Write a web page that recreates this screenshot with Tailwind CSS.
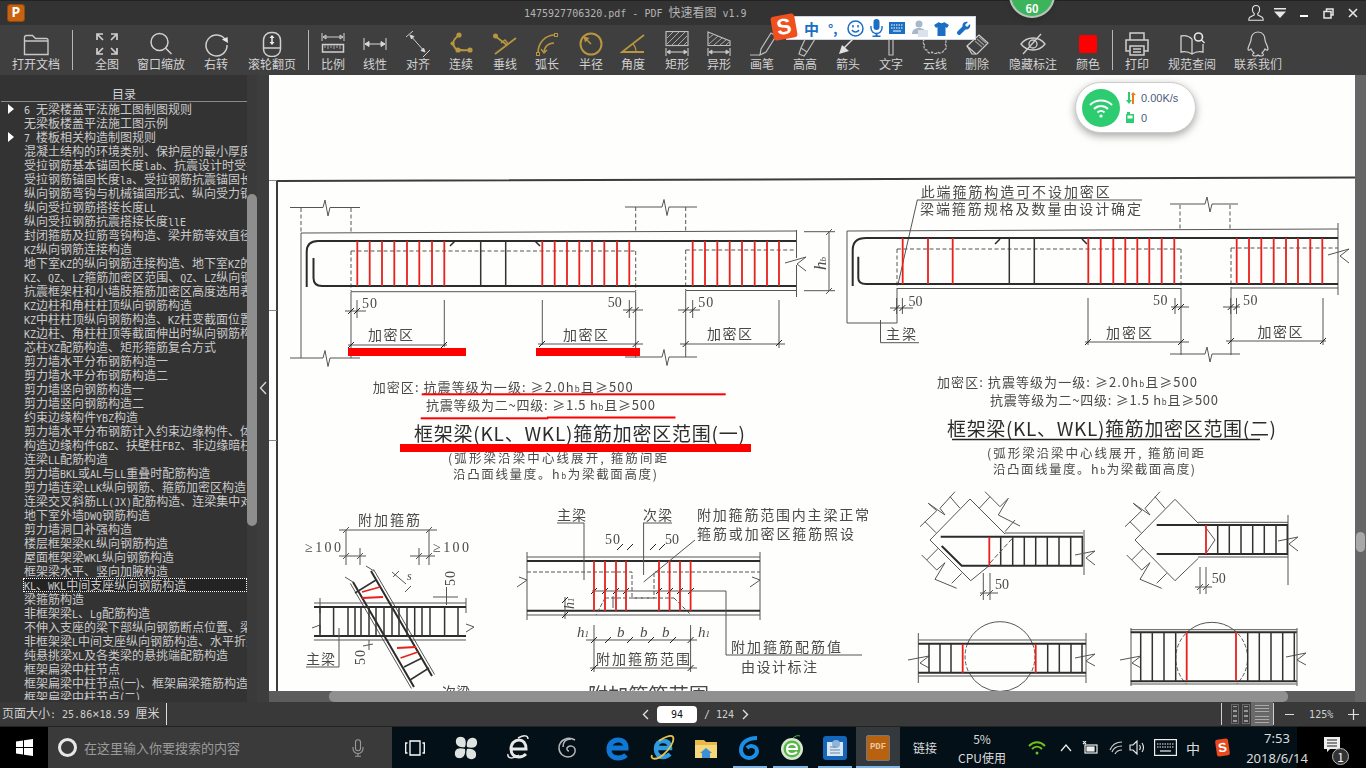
<!DOCTYPE html>
<html lang="zh-CN">
<head>
<meta charset="UTF-8">
<title>PDF 快速看图</title>
<script src="https://cdn.jsdelivr.net/npm/@tailwindcss/browser@4"></script>
</head>
<body class="bg-[#333]">
<div class="relative w-[1366px] h-[768px] overflow-hidden flex flex-col text-[#d2d2d2] text-[12px] font-['Noto_Sans_CJK_SC','Noto_Sans',sans-serif]">

  <!-- title bar -->
  <div class="h-[25px] bg-[#333] border-t border-[#222] flex items-center">
    <div class="ml-[7px] w-[18px] h-[18px] rounded-[3px] bg-[#c9620f] border border-[#8a4a12] flex items-center justify-center text-white text-[14px] leading-none font-bold font-['Liberation_Mono',monospace]">P</div>
    <div class="ml-[499px] text-[#b4b4b4] text-[12px] whitespace-nowrap font-['DejaVu_Sans_Mono','Noto_Sans_CJK_SC',monospace] [&_i]:not-italic [&_i]:text-[10px]"><i>1475927706320.pdf - PDF </i>快速看图<i> v1.9</i></div>
    <div class="ml-auto flex items-center text-[#e6e6e6]">
      <svg class="w-[16px] h-[18px]" viewBox="0 0 16 18" fill="none" stroke="currentColor" stroke-width="1.1"><path d="M8 1.500c2.300 0 3.600 1.700 3.600 4 0 1.800-.8 3.200-1.800 4v1.400l4.400 2.400c.8.500 1 1.200 1 2.900H.8c0-1.700.2-2.400 1-2.900l4.400-2.400V9.500c-1-.8-1.800-2.200-1.800-4 0-2.300 1.300-4 3.600-4z"/></svg>
      <svg class="ml-[9px] w-[14px] h-[12px]" viewBox="0 0 14 12" fill="currentColor"><path d="M1 1h12v1.600H1zM1 4.500h12L7 11z"/></svg>
      <div class="ml-[13px] w-[8px] h-[2px] mt-[6px] bg-white"></div>
      <svg class="ml-[15px] w-[11px] h-[11px]" viewBox="0 0 11 11" fill="none" stroke="currentColor" stroke-width="1.5"><path d="M3.500 3V1h6.500v6H8"/><path d="M1 3.500h7v6.500H1z"/></svg>
      <svg class="ml-[14px] mr-[8px] w-[10px] h-[10px]" viewBox="0 0 10 10" stroke="currentColor" stroke-width="1.6"><path d="M1 1l8 8M9 1l-8 8"/></svg>
    </div>
  </div>

  <!-- toolbar -->
  <div class="h-[50px] bg-[#3f3f3f] flex items-start pl-[10px] [&>div.t]:flex [&>div.t]:flex-col [&>div.t]:items-center [&>div.t]:pt-[6px] [&>div.t]:shrink-0 [&>div.t]:whitespace-nowrap [&>div.t]:leading-[14px] [&_svg]:w-[26px] [&_svg]:h-[26px] [&_svg]:shrink-0">
    <div class="t w-[52px]"><svg viewBox="0 0 26 26" fill="none" stroke="#c8c8c8" stroke-width="1.4"><path d="M1.500 23.500V6.500a2 2 0 0 1 2-2h6l3 3h11a1.500 1.500 0 0 1 1.500 1.500v14.500zM1.500 10h23"/></svg>打开文档</div>
    <div class="ml-[10px] mt-[5px] w-px h-[40px] bg-[#b5b5b5]"></div>
    <div class="t w-[40px] ml-[14px]"><svg viewBox="0 0 26 26" fill="none" stroke="#cfcfcf" stroke-width="1.700"><path d="M3 9V3h6M3 3l6 6M17 3h6v6M23 3l-6 6M3 17v6h6M3 23l6-6M17 23h6v-6M23 23l-6-6"/></svg>全图</div>
    <div class="t w-[52px] ml-[8px]"><svg viewBox="0 0 26 26" fill="none" stroke="#cfcfcf" stroke-width="1.500"><circle cx="11.500" cy="11" r="8.500"/><path d="M17.500 17l6 6"/></svg>窗口缩放</div>
    <div class="t w-[40px] ml-[9px]"><svg viewBox="0 0 26 26" fill="none" stroke="#cfcfcf" stroke-width="1.500"><path d="M22.500 9A10.500 10.500 0 1 0 24 14"/><path d="M19 8.500l5.500-2.500.5 6z" fill="#e8e8e8" stroke="none"/></svg>右转</div>
    <div class="t w-[52px] ml-[10px]"><svg viewBox="0 0 26 26" fill="none" stroke="#cfcfcf" stroke-width="1.500"><rect x="4.500" y="1.500" width="17" height="24" rx="7.500"/><path d="M4.500 17h17"/><path d="M13 5v8" stroke="#eee"/><path d="M10.500 7L13 4l2.500 3zM10.500 11l2.500 3 2.500-3z" fill="#eee" stroke="none"/></svg>滚轮翻页</div>
    <div class="ml-[10px] mt-[5px] w-px h-[40px] bg-[#b5b5b5]"></div>
    <div class="t w-[40px] ml-[4px]"><svg viewBox="0 0 26 26" fill="none" stroke="#cfcfcf" stroke-width="1"><path d="M2 2v8M24 2v8M3 6h20M3 6l3-2v4zM23 6l-3-2v4z"/><rect x="2.500" y="13.500" width="21" height="7.500" stroke-width="1.500"/><path d="M5 14v3M8 14v4M11 14v3M14 14v4M17 14v3M20 14v4" stroke="#aaa"/></svg>比例</div>
    <div class="t w-[40px] ml-[2px]"><svg viewBox="0 0 26 26" fill="none" stroke="#d8d8d8" stroke-width="1"><path d="M2 7v12M24 7v12M3 13h20"/><path d="M3 13l4-2.500v5zM23 13l-4-2.500v5z" fill="#d8d8d8"/></svg>线性</div>
    <div class="t w-[40px] ml-[3px]"><svg viewBox="0 0 26 26" fill="none" stroke="#cfcfcf" stroke-width="1"><path d="M1 6L8 0M18 26l7-7M5 4l15 17"/><path d="M5 4l4 1.500-2.500 2.500zM20 21l-4-1.500 2.500-2.500z" fill="#ddd"/></svg>对齐</div>
    <div class="t w-[40px] ml-[3px]"><svg viewBox="0 0 26 26" fill="none" stroke="#b8963f" stroke-width="1.800"><path d="M11 4C6 8 3 12 7 17c3 3 8 2.500 15 2"/><g fill="#b8963f" stroke="none"><circle cx="11" cy="4" r="2.600"/><circle cx="4.500" cy="12.500" r="2"/><circle cx="10" cy="19" r="2.600"/><circle cx="22" cy="19" r="2.600"/></g></svg>连续</div>
    <div class="t w-[40px] ml-[4px]"><svg viewBox="0 0 26 26" fill="none" stroke="#b8963f" stroke-width="1.800"><path d="M3 23L24 7M3 5l12 9"/><circle cx="3.500" cy="5" r="2.500" fill="#b8963f" stroke="none"/><path d="M9 12l4-3 3 3.500" stroke-width="1.300"/></svg>垂线</div>
    <div class="t w-[40px] ml-[2px]"><svg viewBox="0 0 26 26" fill="none" stroke="#b8963f" stroke-width="1.600"><path d="M4 22C4 12 11 4 21 4"/><path d="M10 22c0-6 4-10 10-10"/><rect x="2.500" y="21.500" width="3" height="3" stroke-width="1"/><rect x="20.500" y="2.500" width="3" height="3" stroke-width="1"/><path d="M7 18l3 4 3-3" stroke-width="1.300"/></svg>弧长</div>
    <div class="t w-[40px] ml-[4px]"><svg viewBox="0 0 26 26" fill="none" stroke="#b8963f" stroke-width="2"><circle cx="13" cy="13" r="10.500"/><path d="M7 7l6 6" stroke-width="1.500"/><path d="M5.500 5.500l6 1.500-4.500 4.500z" fill="#b8963f" stroke="none"/></svg>半径</div>
    <div class="t w-[40px] ml-[2px]"><svg viewBox="0 0 26 26" fill="none" stroke="#b8963f" stroke-width="1.800"><path d="M24 4L2 21h22"/><path d="M13 13c2 2 3 5 3 8" stroke-width="1.200"/></svg>角度</div>
    <div class="t w-[40px] ml-[4px]"><svg viewBox="0 0 26 26" fill="none" stroke="#bdbdbd" stroke-width="1"><rect x="2" y="0.500" width="22" height="14" stroke-width="1.200"/><path d="M3 7L9 1M3 13L15 1M8 14L21 1M14 14L23 5M20 14l3-3" stroke="#aaa"/><path d="M2 17v8M24 17v8M3 21h20" stroke="#d8d8d8"/><path d="M3 21l3-2v4zM23 21l-3-2v4z" fill="#ddd"/></svg>矩形</div>
    <div class="t w-[40px] ml-[2px]"><svg viewBox="0 0 26 26" fill="none" stroke="#bdbdbd" stroke-width="1"><path d="M2 1l22 9v4.500H2z" stroke-width="1.200"/><path d="M3 7l5-4M3 13l9-8M8 14l8-7M14 14l6-5M20 14l3-3" stroke="#aaa"/><path d="M2 17v8M24 17v8M3 21h20" stroke="#d8d8d8"/><path d="M3 21l3-2v4zM23 21l-3-2v4z" fill="#ddd"/></svg>异形</div>
    <div class="t w-[40px] ml-[3px]"><svg viewBox="0 0 26 26" fill="none" stroke="#bdbdbd" stroke-width="1.200"><path d="M1 24h10M11 24l1-6L22 2l5 3-10 16z"/></svg>画笔</div>
    <div class="t w-[40px] ml-[3px]"><svg viewBox="0 0 26 26" fill="none" stroke="#bdbdbd" stroke-width="1.200"><path d="M9 17L15 4l8 4-8 13zM9 17l-2 6 5 2 3-4"/></svg>高高</div>
    <div class="t w-[40px] ml-[3px]"><svg viewBox="0 0 26 26" fill="none" stroke="#e2e2e2" stroke-width="1.500"><path d="M22 4L8 18"/><path d="M4 23l3-9 7 6z" fill="#e2e2e2" stroke="none"/></svg>箭头</div>
    <div class="t w-[40px] ml-[3px]"><svg viewBox="0 0 26 26" fill="none" stroke="#bdbdbd" stroke-width="1.200"><path d="M2 4h22v3M2 4v3M11 4h4v20h-4z"/></svg>文字</div>
    <div class="t w-[40px] ml-[4px]"><svg viewBox="0 0 26 26" fill="none" stroke="#bdbdbd" stroke-width="1.200"><path d="M3 8c-3 2-2 5 0 6-2 2-1 5 2 5 0 3 4 4 5 2 1 2 5 2 6 0 2 2 5 1 6-2 3-1 3-4 1-6 2-2 1-5-2-6 0-3-4-3-5-1-2-2-5-2-6 0-2-2-5-1-7 2z" stroke-dasharray="3 1"/></svg>云线</div>
    <div class="t w-[40px] ml-[2px]"><svg viewBox="0 0 26 26" fill="none" stroke="#cfcfcf" stroke-width="1.200"><path d="M3 15L15 4l9 8-11 11H8z"/><path d="M3 15l9 8"/><path d="M13 8l7 6M15 6l7 6M11 10l7 6" stroke="#999"/></svg>删除</div>
    <div class="t w-[52px] ml-[10px]"><svg viewBox="0 0 26 26" fill="none" stroke="#cfcfcf" stroke-width="1.300"><path d="M1 13c6-8 18-8 24 0-6 8-18 8-24 0z"/><circle cx="13" cy="13" r="4"/><path d="M3 23L21 3"/></svg>隐藏标注</div>
    <div class="t w-[40px] ml-[9px]"><div class="w-[18px] h-[18px] mt-[4px] mb-[4px] rounded-[2px] bg-[#ff0000]"></div>颜色</div>
    <div class="ml-[4px] mt-[5px] w-px h-[40px] bg-[#b5b5b5]"></div>
    <div class="t w-[40px] ml-[4px]"><svg viewBox="0 0 26 26" fill="none" stroke="#cfcfcf" stroke-width="1.500"><path d="M6 9V2h14v7M6 20H2V9h22v11h-4"/><path d="M6 15h14v9H6zM9 18h8M9 21h8"/></svg>打印</div>
    <div class="t w-[52px] ml-[9px]"><svg viewBox="0 0 26 26" fill="none" stroke="#cfcfcf" stroke-width="1.300"><path d="M13 8C10 5 6 4 2 5v16c4-1 8 0 11 2 3-2 7-3 11-2v-8M13 8v15"/><circle cx="19.500" cy="6" r="4" stroke="#e8e8e8" stroke-width="1.600"/><path d="M22.500 9l3 3" stroke="#e8e8e8"/></svg>规范查阅</div>
    <div class="t w-[52px] ml-[14px]"><svg viewBox="0 0 26 26" fill="none" stroke="#cfcfcf" stroke-width="1.200"><path d="M13 1c-5 0-7 4-7 8 0 2-3 6-3 9 0 2 2 1 3 0 1 2 2 3 3 4-2 1-2 3 1 3 2 0 3-1 3-1s1 1 3 1c3 0 3-2 1-3 1-1 2-2 3-4 1 1 3 2 3 0 0-3-3-7-3-9 0-4-2-8-7-8z"/></svg>联系我们</div>
  </div>

  <!-- body -->
  <div class="h-[627px] flex bg-[#333]">
    <!-- outline -->
    <div class="w-[247px] shrink-0 flex flex-col">
      <div class="h-[27px] pt-[12px] text-center leading-[14px] border-b border-[#8a8a8a] ml-px">目录</div>
      <div class="h-[598px] overflow-hidden text-[#cacaca] leading-[14px] whitespace-nowrap [&_i]:not-italic [&_i]:text-[10px] [&_i]:font-['DejaVu_Sans_Mono',monospace] [&>div]:pl-[24px] [&>div]:h-[14px] [&>div]:relative">
        <div><span class="absolute left-[8px] top-[2px] w-0 h-0 border-y-[5px] border-y-transparent border-l-[6px] border-l-white"></span><i>6 </i>无梁楼盖平法施工图制图规则</div>
        <div>无梁板楼盖平法施工图示例</div>
        <div><span class="absolute left-[8px] top-[2px] w-0 h-0 border-y-[5px] border-y-transparent border-l-[6px] border-l-white"></span><i>7 </i>楼板相关构造制图规则</div>
        <div>混凝土结构的环境类别、保护层的最小厚度</div>
        <div>受拉钢筋基本锚固长度<i>lab</i>、抗震设计时受拉钢筋</div>
        <div>受拉钢筋锚固长度<i>la</i>、受拉钢筋抗震锚固长度</div>
        <div>纵向钢筋弯钩与机械锚固形式、纵向受力钢筋</div>
        <div>纵向受拉钢筋搭接长度<i>LL</i></div>
        <div>纵向受拉钢筋抗震搭接长度<i>llE</i></div>
        <div>封闭箍筋及拉筋弯钩构造、梁并筋等效直径</div>
        <div><i>KZ</i>纵向钢筋连接构造</div>
        <div>地下室<i>KZ</i>的纵向钢筋连接构造、地下室<i>KZ</i>的</div>
        <div><i>KZ</i>、<i>QZ</i>、<i>LZ</i>箍筋加密区范围、<i>QZ</i>、<i>LZ</i>纵向钢筋</div>
        <div>抗震框架柱和小墙肢箍筋加密区高度选用表</div>
        <div><i>KZ</i>边柱和角柱柱顶纵向钢筋构造</div>
        <div><i>KZ</i>中柱柱顶纵向钢筋构造、<i>KZ</i>柱变截面位置</div>
        <div><i>KZ</i>边柱、角柱柱顶等截面伸出时纵向钢筋构造</div>
        <div>芯柱<i>XZ</i>配筋构造、矩形箍筋复合方式</div>
        <div>剪力墙水平分布钢筋构造一</div>
        <div>剪力墙水平分布钢筋构造二</div>
        <div>剪力墙竖向钢筋构造一</div>
        <div>剪力墙竖向钢筋构造二</div>
        <div>约束边缘构件<i>YBZ</i>构造</div>
        <div>剪力墙水平分布钢筋计入约束边缘构件、体积</div>
        <div>构造边缘构件<i>GBZ</i>、扶壁柱<i>FBZ</i>、非边缘暗柱</div>
        <div>连梁<i>LL</i>配筋构造</div>
        <div>剪力墙<i>BKL</i>或<i>AL</i>与<i>LL</i>重叠时配筋构造</div>
        <div>剪力墙连梁<i>LLK</i>纵向钢筋、箍筋加密区构造</div>
        <div>连梁交叉斜筋<i>LL(JX)</i>配筋构造、连梁集中对角</div>
        <div>地下室外墙<i>DWQ</i>钢筋构造</div>
        <div>剪力墙洞口补强构造</div>
        <div>楼层框架梁<i>KL</i>纵向钢筋构造</div>
        <div>屋面框架梁<i>WKL</i>纵向钢筋构造</div>
        <div>框架梁水平、竖向加腋构造</div>
        <div class="bg-[#232323] bg-clip-content"><span class="absolute left-[23px] right-0 top-0 bottom-0 border border-dotted border-white"></span><i>KL</i>、<i>WKL</i>中间支座纵向钢筋构造</div>
        <div>梁箍筋构造</div>
        <div>非框架梁<i>L</i>、<i>Lg</i>配筋构造</div>
        <div>不伸入支座的梁下部纵向钢筋断点位置、梁</div>
        <div>非框架梁<i>L</i>中间支座纵向钢筋构造、水平折梁</div>
        <div>纯悬挑梁<i>XL</i>及各类梁的悬挑端配筋构造</div>
        <div>框架扁梁中柱节点</div>
        <div>框架扁梁中柱节点(一)、框架扁梁箍筋构造</div>
        <div>框架扁梁中柱节点(二)</div>
      </div>
    </div>
    <!-- outline scrollbar -->
    <div class="w-[10px] shrink-0 bg-[#3a3a3a] pt-[119px]">
      <div class="h-[332px] rounded-[5px] bg-[#8e8e8e]"></div>
    </div>
    <!-- collapse strip -->
    <div class="w-[12px] shrink-0 bg-[#3d3d3d] flex items-center justify-center">
      <svg class="w-[8px] h-[14px] mt-[-1px]" viewBox="0 0 8 14" fill="none" stroke="#dcdcdc" stroke-width="1.300"><path d="M7 1L1.500 7 7 13"/></svg>
    </div>
    <!-- page view -->
    <div class="w-[1086px] shrink-0 flex flex-col">
      <svg class="block w-[1086px] h-[616px] bg-[#fefefd]" viewBox="269 75 1086 616" fill="none">
        <g class="blur-[0.3px]" stroke="#555" stroke-width="1">
          <!-- page frame -->
          <path d="M277 181L1355 177.500M277 181V691" stroke="#3c3c3c" stroke-width="2"/>
          <path d="M269 180.500h8M269 310.500h8M269 440.500h8" stroke="#888"/>

          <!-- figure one, thin lines -->
          <path d="M290 207.500h33l2-7.500 3 16 2-8.500h30M625 207h37l2-7.500 3 16 2-8.500h28M290 358h33l2-7.500 3 16 2-8.500h30M625 357h37l2-7.500 3 16 2-8.500h28"/>
          <path d="M301 208v25M351 208v25M635.700 207v25M685.700 207v25M351 251h284.700M351 251v40M635.700 251v40M685.700 250h110.700M685.700 250v40" stroke-dasharray="4 2.500"/>
          <path d="M301 233L796.500 231M301 233v125M351 291.700h284.700M351 291.700v66.300M635.700 291.700v66M685.700 290.500v66.500M685.700 290.500h110.700M796.500 230v28M796.500 265v32"/>
          <path d="M785 263l21-6-9 7 9 7" />
          <path d="M357 300v18M444.300 300v47M542.300 300v45M629.300 300v18M692.700 300v18M779 300v48M345 311h21M348 345h99M623 310h20M538 344h105M678 310h22M680 344h105"/>
          <path d="M348 314l6-6M354 314l6-6M348 348l6-6M441 348l6-6M539 347l6-6M632.700 347l6-6M626.300 313l6-6M632.700 313l6-6M682.700 313l6-6M689.700 313l6-6M682.700 347l6-6M776 346l6-6" stroke="#222"/>
          <path d="M306.700 287V252Q306.700 241 318 241H796M313.500 258V278Q313.500 286 322 286H796" stroke="#2c2c2c" stroke-width="2"/>
          <path d="M450 246l5-5M535 241l5 5" stroke="#2c2c2c" stroke-width="1.500"/>
          <path d="M480.700 241v45M505.700 241v45" stroke="#333" stroke-width="1.500"/>
          <path d="M804 231.700h31M804 290.700h31M829 231v60M826 235l6-6M826 294l6-6"/>

          <!-- figure two, thin lines -->
          <path d="M917 200h225M917.300 200L898.300 283"/>
          <path d="M1170 204h35l2-7 3 15 2-8h26M1170 354h35l2-7 3 15 2-8h28M1328 255l21-6-9 7 9 7"/>
          <path d="M1180 205v26M1230 205v26M897 249h284M897 249v40M1181 249v40M1231 248h107M1231 248v40" stroke-dasharray="4 2.500"/>
          <path d="M847 231L1338 229M847 231v92h50v-34M897 288.500h284M1181 289v66M1231 288v67M1231 288h107M1338 223v72"/>
          <path d="M896.600 298v16M902.400 298v16M1088 298v47M1175 298v16M1230.700 298v16M1236.500 298v16M1323 298v47M890 308h23M1171 307h18M1223 307h17M1085 342h104M1226 341h100M880.500 320v22.700h38.500"/>
          <path d="M893.600 311l6-6M899.400 311l6-6M1172 310l6-6M1178 310l6-6M1227.700 310l6-6M1233.500 310l6-6M1085 345l6-6M1178 345l6-6M1228 344l6-6M1320 344l6-6" stroke="#222"/>
          <path d="M852.700 286V250Q852.700 238 866 238H1338M858.300 256.700V278Q858.300 284 866 284H1338" stroke="#2c2c2c" stroke-width="2"/>
          <path d="M995 244l5-5M1082 239l5 5" stroke="#2c2c2c" stroke-width="1.500"/>
          <path d="M1009.300 238v46M1034.300 238v46" stroke="#333" stroke-width="1.500"/>
          <path d="M952 439.500h308" stroke="#222" stroke-width="1.500"/>

          <!-- stirrup reinforcement, left figure -->
          <path d="M339 530h98M346 530v35M429 530v35M360 548v17M419 548v17M339 556h27M410 556h25M343 559l6-6M357 559l6-6M416 559l6-6M426 559l6-6M343 533l6-6M426 533l6-6"/>
          <path d="M350.400 583.500L411.400 688.500M373.600 569.500L434.600 674.500M314 603h152M314 640h152M320 598v15M466 598v15M312 628l8-3v8M466 632l8-5-8-3"/>
          <path d="M353 582L414 687M371 571L432 676M314 607h152M314 636h152" stroke="#2c2c2c" stroke-width="2"/>
          <path d="M320 607v29M333.600 607v29M348 607v29M355 607v29M361 607v29M369 607v29M376 607v29M384 607v29M392 607v29M399 607v29M407 607v29M414.700 607v29M422 607v29M430 607v29M444.600 607v29M458 607v29" stroke="#333" stroke-width="1.500"/>
          <path d="M355 593L376 580M404 667L422 658M410 680L429 668" stroke="#333" stroke-width="1.500"/>
          <path d="M306 667h33M339 628v39M433 597h25M446.500 587v18M392 572l14 12M399 571l-6 6M411 586l-6 6M369 640v10M363 646l10-2M345 577l8 5M366 566l8 5"/>

          <!-- stirrup reinforcement, right figure -->
          <path d="M527 557h233M527 615h233M527 552v68M760 552v68M517 587l10-7-8-3M750 587l10-7-8-3"/>
          <path d="M527 561h233M527 610.700h233" stroke="#2c2c2c" stroke-width="2"/>
          <path d="M527 572h105v26h22v-26h106M605 598h69M605 598l-9 17M674 598l17 17" stroke-dasharray="4 2"/>
          <path d="M557 523h27v57M643 523h29M643.600 523v52M643.600 582L695 540M592 591h134v64h136M586 640h111M590 668h107M594 625v47M690.600 625v47M565 597v22M613 608v-12"/>
          <path d="M591 643l6-6M605 643l6-6M627 643l6-6M648 643l6-6M670 643l6-6M687.600 643l6-6M591 671l6-6M687.600 671l6-6M591 594l6-6M602 594l6-6M613 594l6-6M623 594l6-6M656 594l6-6M667 594l6-6M677 594l6-6M688 594l6-6M617 550l6-6M627 550l6-6M650 550l6-6M659 550l6-6M562 603l6-6M562 618l6-6" stroke="#222"/>

          <!-- bottom right figures -->
          <path d="M1005 534L970 499L930 540L970.700 580.700L990 565M1005 533h78M1084 530v45"/>
          <path d="M920 526.700L936.700 510.700L928.300 503.300L945 515L940 508.300L955 491.700M925 521.700L936 532.700M950 496.700L960 508.300"/>
          <path d="M985 491.700L1000 506.700L1008.300 498.300L998.300 515L1020 526M990 496.700L979.300 508.300M1015 520L1005 531.700"/>
          <path d="M921.700 555L936.700 570L945 562.700L935 579.300L956.700 588.300M926.700 560L938.300 548.300M951.700 583.300L961.700 573.300"/>
          <path d="M940.700 536.700H1083M941.700 546L961.700 565.700H1083" stroke="#2c2c2c" stroke-width="2"/>
          <path d="M1000.700 537v29M1012.700 537v29M1024.300 537v29M1035.700 537v29M1047.300 537v29M1059 537v29M1070.700 537v29M1082.300 537v29" stroke="#333" stroke-width="1.500"/>
          <path d="M990 563L1012.700 538" stroke-dasharray="5 2"/>
          <path d="M983.300 573v27M990 573v27M980 593h18M980 596l6-6M987 596l6-6M1075 555l20-4-9 7 9 7"/>

          <path d="M1198.300 523.300L1175 499.300L1135 540L1175 580.700L1198.300 558.300M1198 522.300h90M1198 557h90M1288 515v70M1205 526.700l10 13.300-9 13.300M1278 541l20-4-9 7 9 7"/>
          <path d="M1125 526.700L1141.700 510.700L1133.300 503.300L1150 515L1145 508.300L1160 491.700M1130 521.700L1141 532.700M1155 496.700L1165 508.300"/>
          <path d="M1126.700 555L1141.700 570L1150 562.700L1140 579.300L1161.700 588.300M1131.700 560L1143.300 548.300M1156.700 583.300L1166.700 573.300"/>
          <path d="M1156.700 525H1288M1156.700 554H1288" stroke="#2c2c2c" stroke-width="2"/>
          <path d="M1217.700 525v29M1229.300 525v29M1241 525v29M1252.700 525v29M1264.300 525v29M1276 525v29M1287.300 525v29" stroke="#333" stroke-width="1.500"/>
          <path d="M1200 567v27M1206 567v27M1195 587h17M1197 590l6-6M1203 590l6-6"/>

          <path d="M918.300 640H1086M918.300 676H1086M918.300 633v50M1086 633v50M908 660l21-4-9 7 9 5M1075 658l20-4-9 7 9 5M1032.500 643.700A35 35 0 0 0 967.500 643.700M969 672.700A35 35 0 0 0 1031 672.700"/>
          <path d="M967.500 643.700A35 35 0 0 0 969 672.700M1032.500 643.700A35 35 0 0 1 1031 672.700" stroke-dasharray="4 2"/>
          <path d="M918.300 643.700H1086M918.300 672.700H1086" stroke="#2c2c2c" stroke-width="2"/>
          <path d="M929 644v29M940 644v29M951 644v29M1047.700 644v29M1059.300 644v29M1071 644v29M1082 644v29" stroke="#333" stroke-width="1.500"/>

          <path d="M1130.700 629.700H1296.700M1130.700 684H1296.700M1131 628v58M1297 628v58M1120 660l21-4-9 7 9 5M1286 657l20-4-9 7 9 5M1233.600 629.700A36 36 0 0 0 1190 629.700"/>
          <path d="M1190 629.700A36 36 0 0 0 1186.500 684M1233.600 629.700A36 36 0 0 1 1236.700 684" stroke-dasharray="4 2"/>
          <path d="M1130.700 632.300H1296.700M1130.700 681.300H1296.700" stroke="#2c2c2c" stroke-width="2"/>
          <path d="M1140.700 632v49M1152.300 632v49M1164 632v49M1175.700 632v49M1247.700 632v49M1259.300 632v49M1271 632v49M1282.700 632v49M1294.300 632v49" stroke="#333" stroke-width="1.500"/>

          <!-- scanned labels -->
          <g fill="#4a4a4a" stroke="none" font-family="'Noto Sans CJK SC',sans-serif" font-size="14">
            <text x="368" y="340" textLength="45">加密区</text>
            <text x="563" y="340" textLength="45">加密区</text>
            <text x="707" y="339" textLength="45">加密区</text>
            <text x="1106" y="338" textLength="46">加密区</text>
            <text x="1257.500" y="337" textLength="45">加密区</text>
            <text x="886" y="339" textLength="30">主梁</text>
            <text x="372.700" y="392" font-size="13" textLength="260">加密区: 抗震等级为一级: ≥2.0h<tspan font-size="8">b</tspan>且≥500</text>
            <text x="426" y="410" font-size="13" textLength="229">抗震等级为二~四级: ≥1.5 h<tspan font-size="8">b</tspan>且≥500</text>
            <text x="937" y="387" font-size="13" textLength="260">加密区: 抗震等级为一级: ≥2.0h<tspan font-size="8">b</tspan>且≥500</text>
            <text x="990" y="405" font-size="13" textLength="228">抗震等级为二~四级: ≥1.5 h<tspan font-size="8">b</tspan>且≥500</text>
            <text x="414" y="440.500" font-size="19" fill="#2c2c2c" textLength="331">框架梁(KL、WKL)箍筋加密区范围(一)</text>
            <text x="947" y="435.500" font-size="19" fill="#2c2c2c" textLength="329">框架梁(KL、WKL)箍筋加密区范围(二)</text>
            <text x="448" y="463" font-size="12.500" textLength="219">(弧形梁沿梁中心线展开, 箍筋间距</text>
            <text x="453" y="479" font-size="12.500" textLength="204">沿凸面线量度。h<tspan font-size="8">b</tspan>为梁截面高度)</text>
            <text x="987" y="458" font-size="12.500" textLength="217">(弧形梁沿梁中心线展开, 箍筋间距</text>
            <text x="993" y="474" font-size="12.500" textLength="202">沿凸面线量度。h<tspan font-size="8">b</tspan>为梁截面高度)</text>
            <text x="920.700" y="197" textLength="189">此端箍筋构造可不设加密区</text>
            <text x="920" y="214" textLength="221">梁端箍筋规格及数量由设计确定</text>
            <text x="358" y="525" textLength="62">附加箍筋</text>
            <text x="306" y="664" textLength="29">主梁</text>
            <text x="442" y="697" textLength="28">次梁</text>
            <text x="557" y="520" textLength="29">主梁</text>
            <text x="643" y="520" textLength="29">次梁</text>
            <text x="697" y="520" textLength="172">附加箍筋范围内主梁正常</text>
            <text x="697" y="539" textLength="157">箍筋或加密区箍筋照设</text>
            <text x="596" y="664" textLength="94">附加箍筋范围</text>
            <text x="731" y="652" textLength="110">附加箍筋配筋值</text>
            <text x="741" y="672" textLength="76">由设计标注</text>
            <text x="588" y="703" font-size="20" textLength="121">附加箍筋范围</text>
            <g font-family="'Liberation Serif',serif">
              <text x="362" y="308" textLength="15">50</text>
              <text x="607.700" y="307" textLength="14">50</text>
              <text x="698.300" y="307" textLength="15">50</text>
              <text x="908.500" y="305.700" textLength="14">50</text>
              <text x="1153" y="305" textLength="14.500">50</text>
              <text x="1243" y="304.700" textLength="14.500">50</text>
              <text x="305" y="552" textLength="36">≥100</text>
              <text x="433" y="552" textLength="36">≥100</text>
              <text x="605" y="544" textLength="15">50</text>
              <text x="665" y="544" textLength="14">50</text>
              <text x="995" y="589" textLength="14">50</text>
              <text x="1211.700" y="583" textLength="14">50</text>
              <text transform="translate(365 665) rotate(-90)" textLength="15">50</text>
              <text transform="translate(455 586) rotate(-90)" textLength="15">50</text>
              <text x="407" y="580" font-size="12" font-style="italic">s</text>
              <text transform="translate(826 270) rotate(-90)" font-style="italic" font-size="17">h<tspan font-size="9">b</tspan></text>
              <text transform="translate(574 609) rotate(-90)" font-style="italic" font-size="14">h<tspan font-size="9">1</tspan></text>
              <g font-style="italic" font-size="15">
                <text x="577" y="637">h<tspan font-size="9">1</tspan></text>
                <text x="617" y="637">b</text>
                <text x="640" y="637">b</text>
                <text x="662" y="637">b</text>
                <text x="698" y="637">h<tspan font-size="9">1</tspan></text>
              </g>
            </g>
          </g>
        </g>

        <!-- red annotations -->
        <g stroke="#e8211d" stroke-width="1.800">
          <path d="M357.300 241v45M369.700 241v45M382 241v45M394.300 241v45M407 241v45M419.300 241v45M432 241v45M444.300 241v45"/>
          <path d="M542.300 241v45M554.700 241v45M567 241v45M579.300 241v45M592 241v45M604.300 241v45M617 241v45M629.300 241v45"/>
          <path d="M692.700 241v45M705 241v45M717.300 241v45M729.700 241v45M742 241v45M754.700 241v45M767 241v45M779 241v45"/>
          <path d="M902.700 238v46M928 238v46M952.700 238v46"/>
          <path d="M1088.300 238v46M1100.700 238v46M1113.300 238v46M1125.300 238v46M1137.300 238v46M1149.300 238v46M1161.700 238v46M1174.300 238v46"/>
          <path d="M1236.700 238v46M1249 238v46M1261.300 238v46M1273.700 238v46M1286 238v46M1298 238v46M1310.300 238v46M1322.300 238v46"/>
          <path d="M594 561v50M605 561v50M616 561v50M626 561v50M659 561v50M669.600 561v50M680 561v50M690.600 561v50"/>
          <path d="M989.300 537v29M1206 525v29M962.700 644v29M1035.700 644v29M1186.700 632v49M1236 632v49"/>
          <path d="M362 592l18-5M362 598l21-1M397 648l19-1M400.500 658l17.500-6"/>
        </g>
        <g fill="#ff0000">
          <rect x="348" y="348" width="118" height="8"/>
          <rect x="536" y="348" width="104" height="8"/>
          <rect x="400" y="444" width="351" height="8"/>
          <rect x="421.700" y="393.300" width="304" height="2"/>
          <rect x="420.700" y="417.300" width="127.500" height="2"/>
          <rect x="547" y="416.500" width="128.500" height="2"/>
        </g>
      </svg>
      <!-- horizontal scrollbar -->
      <div class="h-[11px] bg-[#5c5c5c] pl-[60px] pr-[67px]"><div class="h-[11px] rounded-[5px] bg-[#909090]"></div></div>
    </div>
    <!-- vertical scrollbar -->
    <div class="w-[11px] shrink-0 bg-[#666] pt-[457px] px-px">
      <div class="h-[20px] rounded-[5px] bg-[#a8a8a8]"></div>
    </div>
  </div>

  <!-- status bar -->
  <div class="h-[25px] bg-[#393939] border-b border-[#222] flex items-center text-[#d0d0d0] relative">
    <div class="pl-[2px] w-[166px] whitespace-nowrap leading-[14px] font-['DejaVu_Sans_Mono','Noto_Sans_CJK_SC',monospace] [&_i]:not-italic [&_i]:text-[10px]">页面大小<i>: 25.86</i>×<i>18.59 </i>厘米</div>
    <div class="w-px h-[22px] bg-[#ddd]"></div>
    <svg class="ml-[475px] w-[7px] h-[11px]" viewBox="0 0 7 11" fill="none" stroke="#e0e0e0" stroke-width="1.400"><path d="M6 1L1.500 5.500 6 10"/></svg>
    <div class="ml-[8px] w-[40px] h-[17px] rounded-[4px] bg-white text-[#111] text-center leading-[17px] text-[10px] font-['DejaVu_Sans_Mono',monospace]">94</div>
    <div class="ml-[7px] text-[10px] whitespace-nowrap font-['DejaVu_Sans_Mono',monospace]">/ 124</div>
    <svg class="ml-[8px] w-[7px] h-[11px]" viewBox="0 0 7 11" fill="none" stroke="#e0e0e0" stroke-width="1.400"><path d="M1 1l4.500 4.500L1 10"/></svg>
    <div class="ml-[472px] w-px h-[22px] bg-[#cfcfcf]"></div>
    <div class="ml-[7px] w-[22px] h-[20px] flex justify-center gap-[3px]">
      <div class="w-[8px] h-[20px] border border-[#666] bg-[repeating-linear-gradient(#999_0_2px,#444_2px_5px)] bg-clip-content p-px"></div>
      <div class="w-[8px] h-[20px] border border-[#666] bg-[repeating-linear-gradient(#999_0_2px,#444_2px_5px)] bg-clip-content p-px"></div>
    </div>
    <div class="w-[22px] h-[24px] bg-[#6a6a6a] flex flex-col items-center justify-center gap-[2px]">
      <div class="w-[14px] h-[9px] bg-[repeating-linear-gradient(#aaa_0_1px,#666_1px_3px)]"></div>
      <div class="w-[14px] h-[7px] bg-[repeating-linear-gradient(#aaa_0_1px,#666_1px_3px)]"></div>
    </div>
    <div class="w-px h-[22px] bg-[#cfcfcf]"></div>
    <div class="ml-[11px] w-[9px] h-px bg-[#ddd]"></div>
    <div class="ml-[15px] text-[10px] font-['DejaVu_Sans_Mono',monospace]">125%</div>
    <svg class="ml-[15px] w-[11px] h-[11px]" viewBox="0 0 11 11" stroke="#e0e0e0" stroke-width="1.200"><path d="M5.500 0v11M0 5.500h11"/></svg>
  </div>

  <!-- taskbar -->
  <div class="h-[41px] bg-[#031018] flex items-center text-[#dcdcdc] relative">
    <div class="w-[48px] h-full bg-black flex items-center justify-center">
      <svg class="w-[17px] h-[17px]" viewBox="0 0 17 17" fill="#fff"><path d="M0 2.400L7 1.400V8H0zM8 1.200L17 0V8H8zM0 9h7v6.600L0 14.600zM8 9h9v8l-9-1.200z"/></svg>
    </div>
    <div class="w-[344px] h-full bg-[#3a3a3a] flex items-center pl-[10px] text-[#9b9b9b] text-[13px]">
      <div class="w-[19px] h-[19px] rounded-full border-[3px] border-[#e8e8e8] shrink-0"></div>
      <div class="ml-[7px] whitespace-nowrap">在这里输入你要搜索的内容</div>
      <svg class="ml-[112px] w-[12px] h-[18px] shrink-0" viewBox="0 0 12 18" fill="none" stroke="#9a9a9a" stroke-width="1.100"><rect x="3.500" y="0.800" width="5" height="11" rx="2.500"/><path d="M1 8v1.500a5 5 0 0 0 10 0V8M6 14.500V17M3 17.300h6"/></svg>
    </div>
    <svg class="ml-[13px] w-[20px] h-[16px]" viewBox="0 0 20 16" fill="none" stroke="#fff" stroke-width="1.300"><path d="M5 1h10v14H5zM2.500 3H.7v10h1.800M17.500 3h1.800v10h-1.800"/></svg>
    <div class="flex items-center [&>div]:w-[44px] [&>div]:h-[41px] [&>div]:shrink-0 [&>div]:flex [&>div]:items-center [&>div]:justify-center [&>div]:relative ml-[19px] [&_svg]:w-[26px] [&_svg]:h-[26px]">
      <div><svg viewBox="0 0 26 26" fill="#dfe3e0"><path d="M12 12C6 13 2 10 3 5c1-4 7-4 9-1 1 2 1 5 0 8zM14 12c-1-6 2-10 7-9 4 1 4 7 1 9-2 1-5 1-8 0zM14 14c6-1 10 2 9 7-1 4-7 4-9 1-1-2-1-5 0-8zM12 14c1 6-2 10-7 9-4-1-4-7-1-9 2-1 5-1 8 0z"/></svg></div>
      <div class="ml-[8px]"><svg viewBox="0 0 26 26" fill="none" stroke="#e8e8e8" stroke-width="3"><path d="M6 14h15c0-6-3-9-7-9s-8 3-8 9c0 5 3 8 8 8 3 0 5-1 7-3"/><path d="M3 19C2 24 8 24 14 20M13 3c6-3 10-3 10 1" stroke-width="1.500"/></svg></div>
      <div class="ml-[5px]"><svg viewBox="0 0 26 26" fill="none" stroke="#b8b8b8" stroke-width="1.500"><path d="M21 5C14 1 5 5 5 13c0 6 5 9 9 9 5 0 8-4 7-8-1-3-5-4-7-2-2 1-1 4 1 4"/><path d="M17 4C11 4 9 8 9 12"/></svg></div>
      <div class="ml-[7px]"><svg viewBox="0 0 26 26" fill="none" stroke="#0f78d4" stroke-width="5"><path d="M5 13h16c0-5-3-8-8-8S4 9 4 14c0 6 4 9 9 9 3 0 6-1 8-3"/></svg></div>
      <div><svg viewBox="0 0 26 26" fill="none" stroke="#2e9be0" stroke-width="4.500"><path d="M7 13h14c0-5-3-7-7-7s-7 3-7 8 3 8 7 8c3 0 5-1 7-3"/><path d="M3 20C1 25 8 25 14 20S26 6 24 2c-2-3-10 1-14 4" stroke="#e8c44a" stroke-width="1.800"/></svg></div>
      <div><svg viewBox="0 0 26 26"><path d="M2 5h9l2 2h11v4H2z" fill="#e8b94a"/><path d="M2 10h22v13H2z" fill="#f7d77c"/><path d="M9 18h8v5H9z" fill="#3a8fd6"/><path d="M7 18l6-5 6 5z" fill="#3a8fd6"/></svg></div>
      <div class="ml-[-1px]"><svg viewBox="0 0 26 26" fill="none" stroke="#1a8fe6" stroke-width="4"><path d="M21 3C11 3 5 8 5 15c0 5 4 8 8 8s8-3 8-7c0-3-3-5-6-5-2 0-3 1-4 2"/></svg><span class="absolute bottom-0 left-[6px] w-[34px] h-[2px] bg-[#7db6e8]"></span></div>
      <div class="ml-[-1px]"><svg viewBox="0 0 26 26"><circle cx="13" cy="14" r="11" fill="#d8e8d0"/><circle cx="13" cy="14" r="8.500" fill="#59b54a"/><path d="M8 14h10c0-3-2-5-5-5s-5 2-5 5 2 5 5 5c2 0 4-1 5-2" fill="none" stroke="#fff" stroke-width="2"/><path d="M14 3c2-2 5-3 7-2" stroke="#59b54a" fill="none"/></svg><span class="absolute bottom-0 left-[3px] w-[35px] h-[2px] bg-[#7db6e8]"></span></div>
      <div class="ml-[-1px]"><svg viewBox="0 0 26 26"><rect x="1" y="1" width="24" height="24" rx="3" fill="#1565b8"/><rect x="5" y="7" width="16" height="14" fill="#d7e6f4"/><circle cx="14" cy="9" r="4" fill="#8fb4d8"/><path d="M8 12h6M8 15h10M8 18h10" stroke="#6a85a0"/></svg><span class="absolute bottom-0 left-[5px] w-[34px] h-[2px] bg-[#7db6e8]"></span></div>
      <div class="bg-[#33393d] ml-[-1px]"><div class="w-[24px] h-[26px] rounded-[2px] bg-[#b8610f] border border-[#777] flex items-center justify-center text-[#e8c8a0] text-[9px] font-bold font-['Liberation_Mono',monospace]">PDF</div><span class="absolute bottom-0 left-0 w-full h-[2px] bg-[#7db6e8]"></span></div>
    </div>
    <div class="ml-[13px] text-[12px] whitespace-nowrap">链接</div>
    <div class="ml-[20px] w-[50px] text-center leading-[19px] text-[12px] whitespace-nowrap">5%<br>CPU使用</div>
    <svg class="ml-[21px] w-[18px] h-[14px]" viewBox="0 0 18 14" fill="none" stroke="#6ec21a" stroke-width="2"><path d="M1 5c5-5 11-5 16 0M4 8c3-3 7-3 10 0"/><circle cx="9" cy="12" r="1.500" fill="#6ec21a" stroke="none"/></svg>
    <svg class="ml-[14px] w-[12px] h-[8px]" viewBox="0 0 12 8" fill="none" stroke="#eee" stroke-width="1.200"><path d="M1 7l5-6 5 6"/></svg>
    <svg class="ml-[10px] w-[16px] h-[14px]" viewBox="0 0 16 14" fill="none" stroke="#eee" stroke-width="1.200"><rect x="3" y="4" width="12" height="8"/><rect x="5" y="6" width="7" height="4" fill="#eee"/><path d="M1 0l3 3M4 0L1 3"/></svg>
    <svg class="ml-[11px] w-[14px] h-[14px]" viewBox="0 0 14 14" fill="none" stroke="#cfcfcf" stroke-width="1.200"><path d="M1 9c2-5 6-8 12-8M3 11c1-3 4-6 10-6M6 13c1-2 3-4 7-4"/></svg>
    <svg class="ml-[6px] w-[16px] h-[15px]" viewBox="0 0 16 15" fill="none" stroke="#eee" stroke-width="1.100"><path d="M1 5h3l4-4v13l-4-4H1zM10.500 5c1 1.500 1 3.500 0 5M13 3c2 3 2 6 0 9"/></svg>
    <svg class="ml-[9px] w-[23px] h-[17px]" viewBox="0 0 23 17" fill="none" stroke="#eee" stroke-width="1.200"><rect x="0.600" y="0.600" width="21.800" height="15.800"/><path d="M3 5h17M3 8h17" stroke-dasharray="1.500 1"/><path d="M6 12h11"/></svg>
    <div class="ml-[9px] text-[14px] leading-none">中</div>
    <div class="ml-[16px] w-[13px] h-[17px] rounded-[2px] bg-[#e8491d] text-white text-[13px] font-bold leading-[17px] text-center rotate-[-8deg] font-['Liberation_Sans',sans-serif]">S</div>
    <div class="relative z-10 ml-[17px] w-[62px] text-center text-[13px] leading-[20px] whitespace-nowrap font-['Noto_Sans',sans-serif]">7:53<br>2018/6/14</div>
    <div class="ml-[-11px] flex-1 h-full bg-black relative flex items-center justify-center">
      <svg class="w-[16px] h-[16px] ml-[1px] mt-[-6px]" viewBox="0 0 16 16" fill="#eee"><path d="M0 0h16v12H6l-3 3v-3H0z"/><path d="M3 3h10M3 6h10M3 9h10" stroke="#222"/></svg>
      <div class="absolute left-[35px] top-[21px] w-[17px] h-[17px] rounded-full bg-[#333] border border-[#bbb] text-white text-[12px] leading-[15px] text-center">1</div>
    </div>
  </div>

  <!-- sogou ime bar, over the toolbar -->
  <div class="absolute left-[786px] top-[16px] w-[190px] h-[24px] bg-white border border-[#cfd6e6] flex items-center text-[#1a6fc4]">
    <span class="ml-[17px] text-[15px] font-bold leading-none">中</span>
    <span class="ml-[9px] text-[13px] font-bold leading-none">°,</span>
    <svg class="ml-[9px] w-[17px] h-[17px]" viewBox="0 0 17 17" fill="none" stroke="currentColor" stroke-width="1.500"><circle cx="8.500" cy="8.500" r="7.500"/><path d="M5 10c1.500 2.500 5.500 2.500 7 0"/><path d="M6 5v2.500M11 5v2.500"/></svg>
    <svg class="ml-[6px] w-[13px] h-[18px]" viewBox="0 0 13 18" fill="currentColor"><rect x="3.500" y="0" width="6" height="11" rx="3"/><path d="M1 7v2a5.500 5.500 0 0 0 11 0V7" fill="none" stroke="currentColor" stroke-width="1.400"/><path d="M5.500 14h2v2.500h3V18h-8v-1.500h3z"/></svg>
    <svg class="ml-[6px] w-[16px] h-[12px]" viewBox="0 0 16 12" fill="currentColor"><path d="M0 0h16v12H0z"/><path d="M2 3h12M2 6h12" stroke="#fff" stroke-dasharray="1.500 1"/><path d="M4 9h8" stroke="#fff"/></svg>
    <svg class="ml-[7px] w-[16px] h-[17px]" viewBox="0 0 16 17" fill="#a9b8c8"><circle cx="7" cy="4" r="3.500"/><path d="M0 14c0-4 3-6 7-6s7 2 7 6z"/><rect x="6" y="10" width="10" height="7" fill="#dbe3ea"/></svg>
    <svg class="ml-[6px] w-[15px] h-[15px]" viewBox="0 0 15 15" fill="currentColor"><path d="M5 1L0 4l2 3 1.500-1v9h8V6L13 7l2-3-5-3c-.5 1.500-4.500 1.500-5 0z"/></svg>
    <svg class="ml-[8px] w-[14px] h-[14px]" viewBox="0 0 14 14" fill="currentColor"><path d="M13 3l-3 3-2-2 3-3C8 0 5 2 5.500 5.500L.7 10.300a2 2 0 0 0 3 3L8.500 8.500C12 9 14 6 13 3z"/></svg>
  </div>
  <div class="absolute left-[772px] top-[15px] w-[24px] h-[24px] rounded-[3px] bg-[#f0501e] rotate-[-10deg] flex items-center justify-center text-white text-[22px] leading-none font-bold font-['Liberation_Sans',sans-serif]">S</div>

  <!-- score badge -->
  <div class="absolute left-[1009px] top-[-28px] w-[46px] h-[46px] rounded-full bg-[#3db45c] border-2 border-[#b8c4ba] flex items-end justify-center pb-[1px] text-white text-[11px] font-bold leading-[14px] shadow-md">60</div>

  <!-- network widget -->
  <div class="absolute left-[1075px] top-[82px] w-[121px] h-[51px] rounded-[26px] bg-white border border-[#ccc] shadow-[0_3px_8px_rgba(0,0,0,0.35)] flex items-center pl-[6px]">
    <div class="w-[38px] h-[38px] rounded-full bg-[#2ecc71] flex items-center justify-center">
      <svg class="w-[24px] h-[20px]" viewBox="0 0 24 20" fill="none" stroke="#fff" stroke-width="2"><path d="M1 7c6-6 16-6 22 0M5 11c4-4 10-4 14 0M8.500 14.500c2-2 5-2 7 0"/><circle cx="12" cy="18" r="1.600" fill="#fff" stroke="none"/></svg>
    </div>
    <div class="ml-[6px] flex flex-col gap-[6px] text-[#4b5a7a] text-[11px] leading-[14px] font-['Liberation_Sans',sans-serif]">
      <div class="flex items-center gap-[5px]">
        <svg class="w-[10px] h-[12px]" viewBox="0 0 10 12" fill="none" stroke-width="2"><path d="M3 0v10" stroke="#2ecc71"/><path d="M0 8l3 4 3-4z" fill="#2ecc71"/><path d="M7 12V2" stroke="#f07a1a"/><path d="M5 3l2-3 3 3z" fill="#f07a1a"/></svg>
        0.00K/s
      </div>
      <div class="flex items-center gap-[7px]">
        <svg class="w-[8px] h-[11px]" viewBox="0 0 8 11" fill="#2ecc71"><path d="M0 2h8v9H0z"/><path d="M1 0h3v2H1z"/><path d="M1.500 3.500h5v3h-5z" fill="#fff"/></svg>
        0
      </div>
    </div>
  </div>
</div>
</body>
</html>
